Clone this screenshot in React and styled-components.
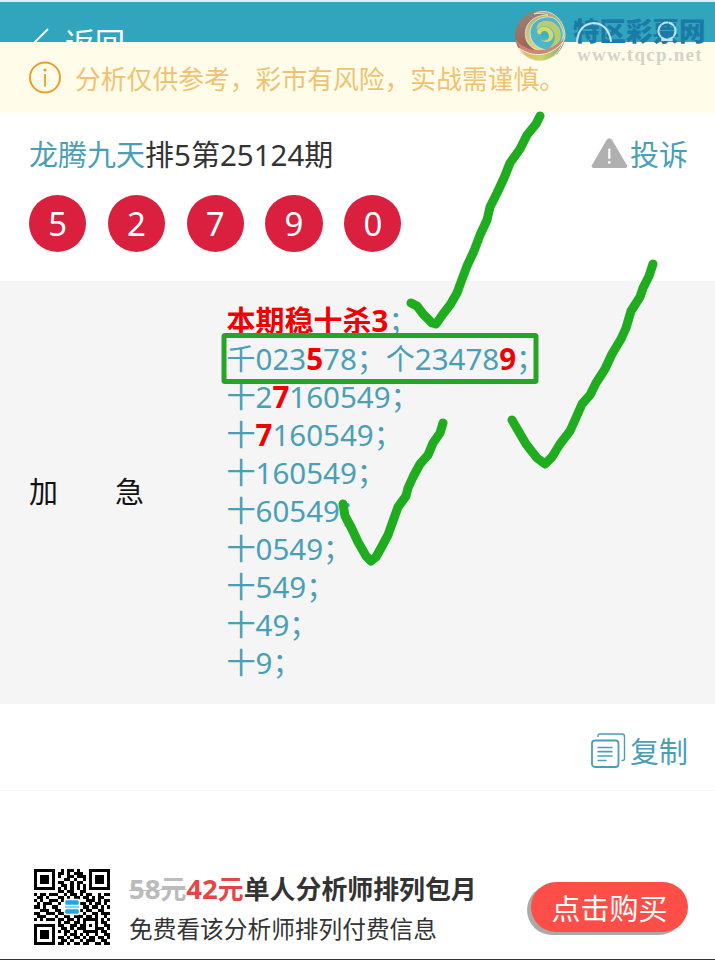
import React from 'react';
import styled, { createGlobalStyle } from 'styled-components';

const tealC = '#4a9fb5';
const headerC = '#32a5be';
const ballC = '#da203e';
const markC = '#1fac1f';
const textC = '#333';

const GlobalStyle = createGlobalStyle`
    body {
        margin: 0;
        background: #fff;
        font-family: "Noto Sans CJK SC", "Noto Sans", sans-serif;
        color: ${textC};
    }
    * {
        box-sizing: border-box;
    }
`;

const Page = styled.div`
    position: relative;
    width: 715px;
    height: 960px;
    overflow: hidden;
    background: #fff;
    display: flex;
    flex-direction: column;
`;

const Header = styled.header`
    height: 42px;
    flex: none;
    overflow: hidden;
    border-top: 2px solid #def0f4;
    background: ${headerC};
    display: flex;
    justify-content: space-between;
    padding: 18px 36px 0 33px;
`;

const Back = styled.a`
    display: flex;
    gap: 16px;
    color: #fff;
    font-size: 30px;
    line-height: 42px;
    height: 42px;
    svg {
        margin-top: 8px;
    }
`;

const Notice = styled.div`
    height: 71px;
    flex: none;
    display: flex;
    align-items: center;
    gap: 13px;
    padding-left: 29px;
    background: #fffdea;
    color: #efc271;
    font-size: 25.8px;
    white-space: nowrap;
`;

const Issue = styled.section`
    height: 168px;
    flex: none;
    padding: 19px 27px 0 29px;
`;

const TitleRow = styled.div`
    display: flex;
    justify-content: space-between;
    height: 42px;
    line-height: 42px;
    font-size: 29px;
`;

const Name = styled.span`
    color: ${tealC};
`;

const Num = styled.span`
    font-family: "Noto Sans", sans-serif;
    font-size: ${p => p.$size || 29.5}px;
    line-height: 1;
`;

const Hit = styled(Num)`
    color: #f00000;
    font-weight: 700;
`;

const IconLink = styled.a`
    display: flex;
    align-items: center;
    gap: ${p => p.$gap}px;
    color: ${tealC};
    font-size: 29px;
    line-height: 42px;
`;

const Balls = styled.div`
    display: flex;
    gap: 21.5px;
    margin-top: 21px;
`;

const Ball = styled.span`
    width: 57.3px;
    height: 57px;
    border-radius: 50%;
    background: ${ballC};
    color: #fff;
    font-family: "Noto Sans", sans-serif;
    font-size: 33px;
    line-height: 58px;
    text-align: center;
`;

const Forecast = styled.section`
    height: 423px;
    flex: none;
    display: flex;
    align-items: center;
    padding: 0 0 5px 29px;
    background: #f5f5f5;
    font-size: 29px;
`;

const Label = styled.div`
    width: 197.5px;
    display: flex;
    gap: 57px;
    color: #111;
`;

const Lines = styled.div`
    color: ${tealC};
`;

const Line = styled.div`
    height: 38px;
    line-height: 38px;
    white-space: nowrap;
`;

const Heading = styled.b`
    color: #f00000;
`;

const CopyRow = styled.section`
    height: 87px;
    flex: none;
    display: flex;
    justify-content: flex-end;
    align-items: center;
    padding: 6px 27px 0 0;
    border-bottom: 1px solid #f7f7f7;
`;

const Promo = styled.footer`
    flex: 1;
    display: flex;
    align-items: flex-start;
    padding: 78px 27px 0 34px;
    border-bottom: 1px solid #333;
`;

const PromoText = styled.div`
    flex: 1;
    padding-left: 19px;
    white-space: nowrap;
`;

const Offer = styled.div`
    height: 40px;
    line-height: 38px;
    font-size: 25.9px;
    font-weight: 700;
`;

const OldPrice = styled.s`
    color: #bbb;
    text-decoration-thickness: 1px;
`;

const Price = styled.span`
    color: #e64545;
`;

const Hint = styled.div`
    height: 38px;
    line-height: 38px;
    font-size: 23.7px;
`;

const Buy = styled.button`
    width: 157px;
    height: 50px;
    margin-top: 13px;
    padding: 0;
    border: 0;
    border-radius: 25px;
    background: #fe4e47;
    box-shadow: -4px 3px 0 #aaa;
    color: #fff;
    font-family: inherit;
    font-size: 29px;
    line-height: 48px;
`;

const Watermark = styled.div`
    position: absolute;
    top: 9px;
    left: 514px;
    display: flex;
    gap: 7px;
`;

const SiteName = styled.div`
    height: 31px;
    padding-top: 5px;
    color: #1b7ba6;
    font-size: 26.5px;
    font-weight: 900;
    line-height: 31px;
    white-space: nowrap;
`;

const SiteUrl = styled.div`
    padding: 5px 0 0 4px;
    color: #d5d3c9;
    font-family: "Liberation Serif", serif;
    font-size: 19px;
    font-weight: 700;
    letter-spacing: 1.25px;
    line-height: 20px;
`;

// hand drawn ticks float over the whole page
const Marks = styled.svg`
    position: absolute;
    top: 0;
    left: 0;
    pointer-events: none;
`;

const qrRows = [
    '1111111001011010001111111',
    '1000001011010111001000001',
    '1011101010011011101011101',
    '1011101000110100101011101',
    '1011101011001011001011101',
    '1000001001101010101000001',
    '1111111010101010101111111',
    '0000000011011001100000000',
    '1011011100101101011001011',
    '0110100011010110110101100',
    '1010011101000010011101011',
    '0101110010000001101011010',
    '1101001100000000110110101',
    '0011100110000001011001100',
    '1100111011000010100110111',
    '0111000100110111011010010',
    '1010111011011010111110101',
    '0000000010110110100010110',
    '1111111011001101101010011',
    '1000001001101011100011101',
    '1011101010110100111110110',
    '1011101000101101010010011',
    '1011101011010110101101101',
    '1000001001101001011100110',
    '1111111011010110110011011',
];

const balls = [5, 2, 7, 9, 0];
const tails = ['160549', '60549', '0549', '549', '49', '9'];

const QrCode = () => (
    <svg width="76" height="76" viewBox="0 0 25 25">
        <g shapeRendering="crispEdges">
            {qrRows.map((row, y) => row.split('').map((bit, x) => (
                bit === '1' ? <rect key={`${x}-${y}`} x={x} y={y} width="1" height="1" fill="#000" /> : null
            )))}
        </g>
        <rect x="9.8" y="9.8" width="5.4" height="5.4" rx="0.6" fill="#fff" />
        <rect x="10.3" y="10.3" width="4.4" height="1.5" rx="0.4" fill="#22a5e8" />
        <rect x="10.2" y="12.1" width="4.6" height="0.8" fill="#8bcff2" />
        <rect x="10.3" y="13.2" width="4.4" height="1.5" rx="0.4" fill="#22a5e8" />
    </svg>
);

const InfoIcon = () => (
    <svg width="33" height="33" viewBox="0 0 33 33" fill="none" stroke="#e5a02c">
        <circle cx="16" cy="16.500" r="15" strokeWidth="2" />
        <path d="M16 13V25.500" strokeWidth="1.8" />
        <circle cx="16" cy="9" r="1.6" fill="#e5a02c" stroke="none" />
    </svg>
);

const WarnIcon = () => (
    <svg width="37" height="31" viewBox="0 0 37 31">
        <path d="M15.7 1.8Q18.3-1.4 21 1.8L35.8 27Q37 30 34 30H2.7Q-.3 30 1 27Z" fill="#b0b0b0" />
        <path d="M18.3 11.500v8.500" stroke="#fff" strokeWidth="2.2" strokeLinecap="round" />
        <circle cx="18.3" cy="24.500" r="1.4" fill="#fff" />
    </svg>
);

const CopyIcon = () => (
    <svg width="35" height="35" viewBox="0 0 35 35" fill="none" stroke={tealC}>
        <path d="M7 4V3q0-2 2-2h22q2.500 0 2.500 2.500v22q0 2-2 2h-1" strokeWidth="1.4" />
        <rect x="1" y="7.500" width="26.500" height="26.500" rx="3" strokeWidth="1.8" />
        <path d="M6.500 14.500h15M6.500 18.700h15M6.500 23h15M6.500 27.500h9" strokeWidth="1.7" />
    </svg>
);

const Swirl = () => (
    <svg width="52" height="53" viewBox="0 0 52 53">
        <defs>
            <linearGradient id="swirl-outer" x1="0" y1="0" x2="0.3" y2="1">
                <stop offset="0" stopColor="#8f8a7c" />
                <stop offset="0.6" stopColor="#a0695d" />
                <stop offset="1" stopColor="#8a6660" />
            </linearGradient>
            <linearGradient id="swirl-olive" x1="0.5" y1="0" x2="0.3" y2="1">
                <stop offset="0" stopColor="#a9a57a" />
                <stop offset="1" stopColor="#dcd884" />
            </linearGradient>
            <linearGradient id="swirl-foot" x1="0" y1="0" x2="1" y2="0">
                <stop offset="0" stopColor="#e0b070" />
                <stop offset="0.5" stopColor="#d2d565" />
                <stop offset="1" stopColor="#7fb07a" />
            </linearGradient>
        </defs>
        <circle cx="26" cy="26.500" r="25" fill="url(#swirl-outer)" />
        {/* outer olive blade, then the blue one and the bright core */}
        <path d="M20 5C34-3 51 9 51 27C50 38 40 44 31 43C17 42 9 32 12 20C14 12 22 6 34 6C29 4 24 4 20 5Z" fill="url(#swirl-olive)" stroke="#eef0dd" strokeWidth="0.8" />
        <path d="M36 8C23 7 15 16 16 25C17 36 28 43 38 40C46 37 50 30 49 23C46 13 42 9 36 8Z" fill="#4fb5c8" stroke="#eef0dd" strokeWidth="0.8" />
        <path d="M25 14C34 8 47 15 47 26C47 33 42 38 35 39C42 34 43 24 36 19C31 16 26 17 23 21C22 18 23 16 25 14Z" fill="#b9cc72" />
        <path d="M23 22C26 15 37 17 39 24C41 31 33 36 27 31C32 33 36 30 35 26C33 22 29 22 27 25C24 26 23 24 23 22Z" fill="#d5da70" />
        <circle cx="30.500" cy="25.500" r="3.600" fill="#42b0bd" />
        <path d="M1.500 30C11 44 35 46 50 29C46 43 36 49 25 48C13 47 5 41 1.500 30Z" fill="#cf8570" />
        <path d="M5 39C18 49 37 48 49 33C45 45 36 52 26 52C17 52 9 47 5 39Z" fill="url(#swirl-foot)" stroke="#f3efdf" strokeWidth="1" />
    </svg>
);

export default function App() {
    return (
        <Page>
            <GlobalStyle />
            <Header>
                <Back>
                    <svg width="16" height="34" viewBox="0 0 16 34" fill="none" stroke="#fff" strokeWidth="1.8">
                        <path d="M15 1L1 15L15 29" />
                    </svg>
                    返回
                </Back>
            </Header>

            <Notice>
                <InfoIcon />
                <span>分析仅供参考，彩市有风险，实战需谨慎。</span>
            </Notice>

            <Issue>
                <TitleRow>
                    <div><Name>龙腾九天</Name>排<Num>5</Num>第<Num>25124</Num>期</div>
                    <IconLink $gap={2}><WarnIcon />投诉</IconLink>
                </TitleRow>
                <Balls>
                    {balls.map(n => <Ball key={n}>{n}</Ball>)}
                </Balls>
            </Issue>

            <Forecast>
                <Label><span>加</span><span>急</span></Label>
                <Lines>
                    <Line><Heading>本期稳十杀<Hit>3</Hit></Heading>；</Line>
                    <Line>千<Num>023</Num><Hit>5</Hit><Num>78</Num>；个<Num>23478</Num><Hit>9</Hit>；</Line>
                    <Line>十<Num>2</Num><Hit>7</Hit><Num>160549</Num>；</Line>
                    <Line>十<Hit>7</Hit><Num>160549</Num>；</Line>
                    {tails.map(t => <Line key={t}>十<Num>{t}</Num>；</Line>)}
                </Lines>
            </Forecast>

            <CopyRow>
                <IconLink $gap={4}><CopyIcon />复制</IconLink>
            </CopyRow>

            <Promo>
                <QrCode />
                <PromoText>
                    <Offer>
                        <OldPrice><Num $size={27.5}>58</Num>元</OldPrice>
                        <Price><Num $size={27.5}>42</Num>元</Price>
                        单人分析师排列包月
                    </Offer>
                    <Hint>免费看该分析师排列付费信息</Hint>
                </PromoText>
                <Buy>点击购买</Buy>
            </Promo>

            <Watermark>
                <Swirl />
                <div>
                    <SiteName>特区彩票网</SiteName>
                    <SiteUrl>www.tqcp.net</SiteUrl>
                </div>
            </Watermark>

            <Marks width="715" height="960" viewBox="0 0 715 960" fill="none" strokeLinecap="round" strokeLinejoin="round">
                <g stroke="#c4e4ee" strokeWidth="2">
                    <path d="M577 41Q579 24 594 23Q608 24 611 41" />
                    <circle cx="667" cy="31" r="8.500" strokeDasharray="5 2" />
                    <path d="M662 40h10" />
                </g>
                <rect x="224" y="335.500" width="312" height="46" rx="1" stroke="#27a327" strokeWidth="5" />
                <g stroke={markC} strokeWidth="9">
                    <path d="M540 116L536 124L527 135L520 149L510 163L504 178L497 193L490 207L487 220L480 235L474 251L467 266L461 282L457 293L450 305L443 314L436 324L432 323L423 314L417 306L411 303" />
                    <path d="M653 264L649 276L643 288L640 297L631 311L626 328L621 339L612 354L605 369L596 383L590 395L582 404L575 420L570 431L560 444L552 457L545 464L537 458L526 444L519 432L512 420" />
                    <path d="M443 423L440 433L433 443L428 455L420 464L413 477L408 488L406 496L398 507L393 521L388 535L381 548L376 557L371 561L366 556L358 542L351 527L345 516L343 504" />
                </g>
            </Marks>
        </Page>
    );
}
